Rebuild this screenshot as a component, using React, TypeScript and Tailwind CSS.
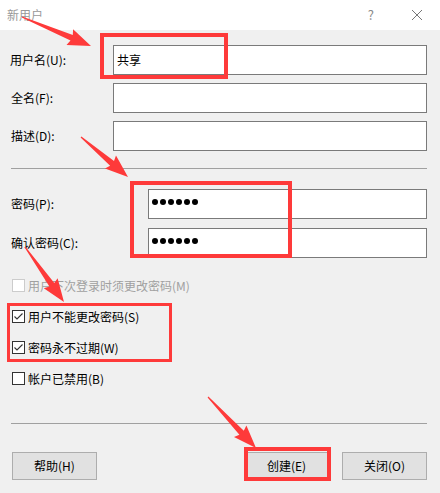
import React from "react";

const FONT = { fontFamily: '"Noto Sans CJK SC", "Microsoft YaHei", sans-serif' };

function arrowPoints(x1: number, y1: number, x2: number, y2: number, h = 21, w = 8.5, s = 3, t = 0.6) {
  const dx = x2 - x1, dy = y2 - y1;
  const len = Math.hypot(dx, dy);
  const ux = dx / len, uy = dy / len;
  const nx = -uy, ny = ux;
  const bx = x2 - ux * h, by = y2 - uy * h;
  const pts: [number, number][] = [
    [x1 + nx * t, y1 + ny * t],
    [bx + nx * s, by + ny * s],
    [bx + nx * w - ux * 2, by + ny * w - uy * 2],
    [x2, y2],
    [bx - nx * w - ux * 2, by - ny * w - uy * 2],
    [bx - nx * s, by - ny * s],
    [x1 - nx * t, y1 - ny * t],
  ];
  return pts.map((p) => p.map((v) => v.toFixed(1)).join(",")).join(" ");
}

function Input({ children }: { children?: React.ReactNode }) {
  return (
    <div className="flex-1 h-[30px] bg-white border border-[#7a7a7a] flex items-center px-[3px] text-[12px] text-black">
      {children}
    </div>
  );
}

function Dots() {
  return (
    <div className="flex gap-[2px] -mt-[4px]">
      {[0, 1, 2, 3, 4, 5].map((i) => (
        <span key={i} className="w-[6px] h-[6px] rounded-full bg-black" />
      ))}
    </div>
  );
}

function Check({ checked, disabled, label }: { checked?: boolean; disabled?: boolean; label: string }) {
  return (
    <div className="h-[31px] flex items-center pl-[12px]">
      <div
        className={
          "w-[13px] h-[13px] border bg-white flex items-center justify-center " +
          (disabled ? "border-[#cccccc]" : "border-[#333333]")
        }
      >
        {checked && (
          <svg width="11" height="11" viewBox="0 0 11 11">
            <polyline points="1.5,5.5 4,8 9.5,2.5" fill="none" stroke="#333" strokeWidth="1.1" />
          </svg>
        )}
      </div>
      <span className={"ml-[3px] text-[12px] " + (disabled ? "text-[#a0a0a0]" : "text-black")}>{label}</span>
    </div>
  );
}

function Btn({ label }: { label: string }) {
  return (
    <div className="w-[85px] h-[28px] bg-[#e1e1e1] border border-[#adadad] flex items-center justify-center text-[12px] text-black">
      {label}
    </div>
  );
}

export default function App() {
  return (
    <div className="relative w-[440px] h-[493px] bg-[#f0f0f0] overflow-hidden" style={FONT}>
      <div className="h-[30px] bg-white flex items-center pl-[7px] pr-[17px]">
        <span className="text-[12px] text-[#999999]">新用户</span>
        <span className="ml-auto text-[13px] text-[#8a8a8a] mr-[37px]">?</span>
        <svg width="12" height="12" viewBox="0 0 12 12">
          <path d="M1 1 L11 11 M11 1 L1 11" stroke="#777" strokeWidth="1" />
        </svg>
      </div>

      <div className="pl-[10px] pr-[13px] pt-[15px] text-[12px] text-black">
        <div className="flex flex-col gap-[8px]">
          <div className="flex items-center">
            <span className="w-[103px]">用户名(U):</span>
            <Input>共享</Input>
          </div>
          <div className="flex items-center">
            <span className="w-[103px] pl-[1px]">全名(F):</span>
            <Input />
          </div>
          <div className="flex items-center">
            <span className="w-[103px] pl-[1px]">描述(D):</span>
            <Input />
          </div>
        </div>

        <div className="mt-[17px] ml-[1px] border-t border-[#a0a0a0]" />

        <div className="mt-[20px] flex flex-col gap-[9px]">
          <div className="flex items-center">
            <span className="w-[138px] pl-[1px]">密码(P):</span>
            <Input>
              <Dots />
            </Input>
          </div>
          <div className="flex items-center">
            <span className="w-[138px] pl-[1px]">确认密码(C):</span>
            <Input>
              <Dots />
            </Input>
          </div>
        </div>
      </div>

      <div className="mt-[12px]">
        <Check disabled label="用户下次登录时须更改密码(M)" />
        <Check checked label="用户不能更改密码(S)" />
        <Check checked label="密码永不过期(W)" />
        <Check label="帐户已禁用(B)" />
      </div>

      <div className="mt-[29px] ml-[11px] mr-[13px] border-t border-[#a0a0a0]" />

      <div className="mt-[28px] flex pl-[12px] pr-[13px]">
        <Btn label="帮助(H)" />
        <div className="ml-auto flex gap-[13px]">
          <Btn label="创建(E)" />
          <Btn label="关闭(O)" />
        </div>
      </div>

      {/* annotation overlays */}
      <div className="absolute left-[100px] top-[33px] w-[128px] h-[46px] border-[4px] border-[#fe3a3a]" />
      <div className="absolute left-[130px] top-[181px] w-[162px] h-[77px] border-[4px] border-[#fe3a3a]" />
      <div className="absolute left-[7px] top-[303px] w-[165px] h-[59px] border-[3px] border-[#fe3a3a]" />
      <div className="absolute left-[244px] top-[447px] w-[87px] h-[34px] border-[4px] border-[#fe3a3a]" />

      <svg className="absolute inset-0 pointer-events-none" width="440" height="493">
        <polygon points={arrowPoints(22, 17, 91, 46)} fill="#fe3a3a" />
        <polygon points={arrowPoints(81, 137, 128, 177)} fill="#fe3a3a" />
        <polygon points={arrowPoints(25, 247, 64, 302)} fill="#fe3a3a" />
        <polygon points={arrowPoints(208, 397, 256, 448)} fill="#fe3a3a" />
      </svg>
    </div>
  );
}
